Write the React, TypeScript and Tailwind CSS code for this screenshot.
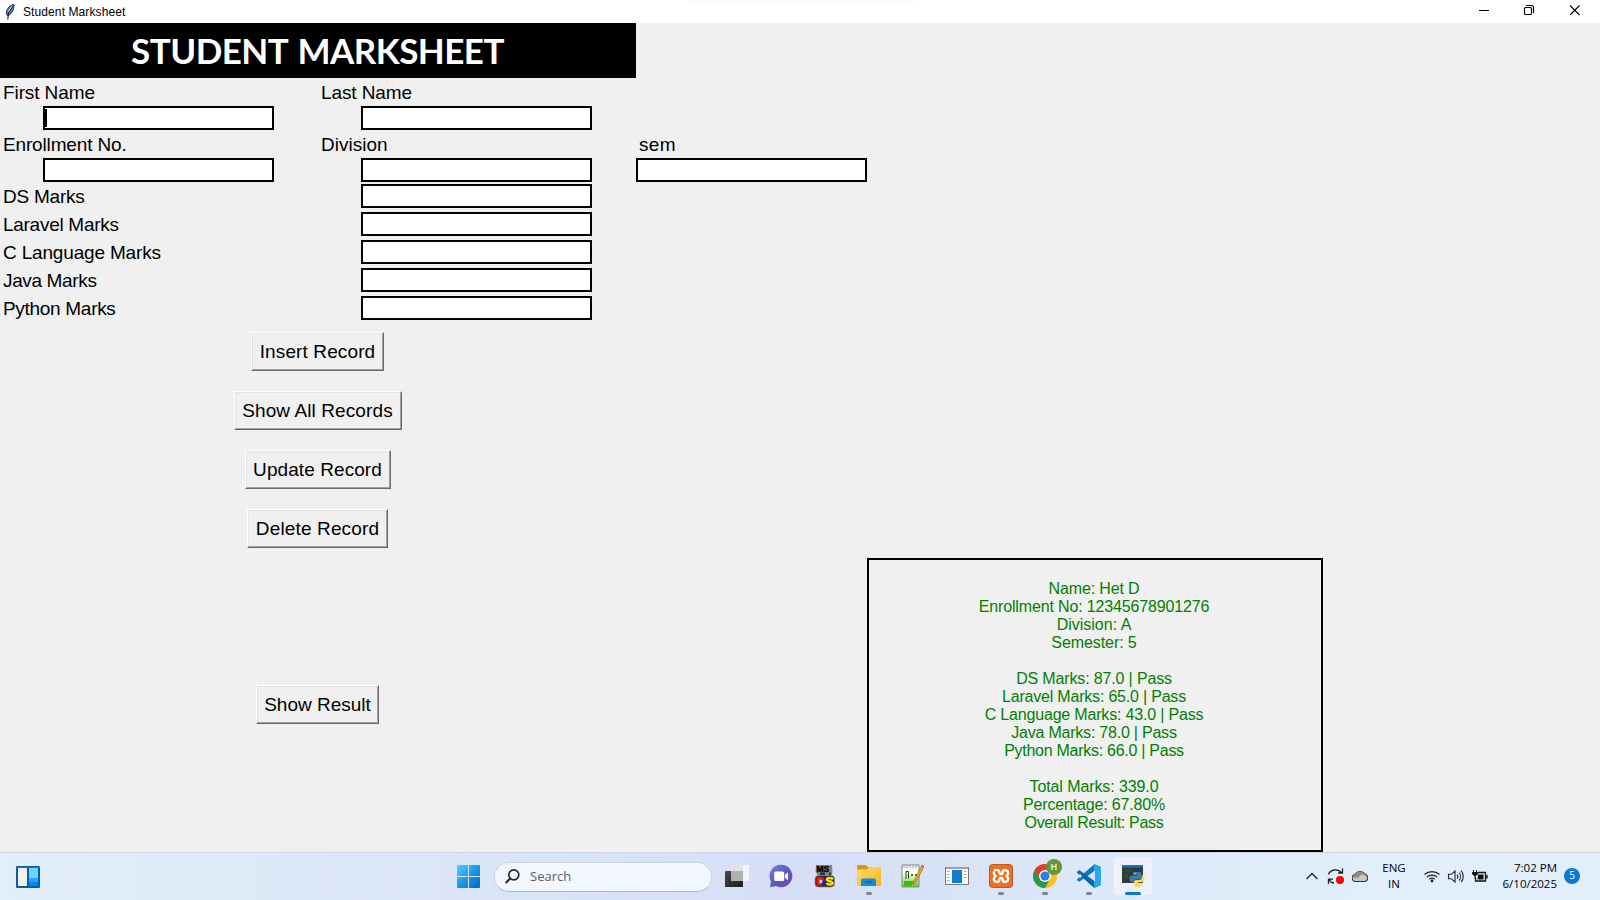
import type { ReactNode } from "react";

const ARIAL = "font-['Liberation_Sans',Arial,sans-serif]";
const SEGOE = "font-['Open_Sans','Noto_Sans',sans-serif]";

function Label({ text, spacing = "" }: { text: string; spacing?: string }) {
  return <label className={`block h-7 pt-px pl-[3px] text-[19px] leading-7 whitespace-nowrap ${spacing}`}>{text}</label>;
}

function Entry({ focused = false, className = "" }: { focused?: boolean; className?: string }) {
  return (
    <div className={`flex h-6 w-[231px] items-center border-2 border-black bg-white ${className}`}>
      {focused && <span className="h-[18px] w-0.5 bg-black" />}
    </div>
  );
}

function TkButton({ text, width, spacing }: { text: string; width: string; spacing: string }) {
  return (
    <button
      className={`${width} h-[39px] border border-t-white border-l-white border-r-[#696969] border-b-[#696969]`}
    >
      <span className={`flex h-full items-center justify-center border border-t-[#e3e3e3] border-l-[#e3e3e3] border-r-[#a0a0a0] border-b-[#a0a0a0] pt-0.5 text-[19px] whitespace-nowrap ${spacing}`}>
        {text}
      </span>
    </button>
  );
}

const markRows = [
  { text: "DS Marks", spacing: "tracking-[-0.22px]" },
  { text: "Laravel Marks", spacing: "tracking-[-0.28px]" },
  { text: "C Language Marks", spacing: "tracking-[-0.17px]" },
  { text: "Java Marks", spacing: "tracking-[-0.36px]" },
  { text: "Python Marks", spacing: "tracking-[-0.3px]" },
];

const resultLines = [
  { text: "Name: Het D", spacing: "tracking-[-0.15px]" },
  { text: "Enrollment No: 12345678901276", spacing: "tracking-[-0.15px]" },
  { text: "Division: A", spacing: "" },
  { text: "Semester: 5", spacing: "tracking-[-0.08px]" },
  { text: "", spacing: "" },
  { text: "DS Marks: 87.0 | Pass", spacing: "tracking-[-0.15px]" },
  { text: "Laravel Marks: 65.0 | Pass", spacing: "tracking-[-0.2px]" },
  { text: "C Language Marks: 43.0 | Pass", spacing: "tracking-[-0.18px]" },
  { text: "Java Marks: 78.0 | Pass", spacing: "tracking-[-0.22px]" },
  { text: "Python Marks: 66.0 | Pass", spacing: "tracking-[-0.27px]" },
  { text: "", spacing: "" },
  { text: "Total Marks: 339.0", spacing: "tracking-[-0.1px]" },
  { text: "Percentage: 67.80%", spacing: "tracking-[-0.17px]" },
  { text: "Overall Result: Pass", spacing: "tracking-[-0.3px]" },
];

function TitleBar() {
  return (
    <header className="flex h-[23px] shrink-0 items-center bg-white">
      <svg className="ml-[5px] h-4 w-[10px]" viewBox="0 0 10 16">
        <path d="M9 .5C5 1 2 4 1.3 9l1.2 3 2-1.2C7 9 9.300 5 9 .5Z" fill="#5483b8" stroke="#17212c" strokeWidth=".9" />
        <path d="M8 2 3.500 9 2.800 15.500" fill="none" stroke="#101820" strokeWidth="1" />
        <path d="M7 2 3 8" stroke="#b7d4f2" strokeWidth="1" />
      </svg>
      <span className="ml-2 pt-px text-[12px] leading-[22px] tracking-[0.1px]">Student Marksheet</span>
      <span className="ml-[563px] h-[3px] w-[228px] self-start bg-linear-to-b from-[#f9f9f9] to-white" />
      <span className="ml-auto flex">
        <svg className="h-[23px] w-[45px]" viewBox="0 0 45 23"><path d="M17 10.500h10" stroke="#000" /></svg>
        <svg className="h-[23px] w-[45px]" viewBox="0 0 45 23" fill="none" stroke="#000">
          <rect x="17.500" y="7.500" width="7" height="7" rx="1" strokeWidth="1.150" />
          <path d="M19 5.500h5.500a2 2 0 0 1 2 2V13" strokeWidth="1.150" />
        </svg>
        <svg className="mr-[3px] h-[23px] w-[45px]" viewBox="0 0 45 23"><path d="m18 5.500 9.500 9.500M27.500 5.500 18 15" stroke="#000" strokeWidth="1.100" /></svg>
      </span>
    </header>
  );
}

function WidgetsIcon() {
  return (
    <svg className="h-[22px] w-6" viewBox="0 0 24 22">
      <rect width="24" height="22" rx="1" fill="#0b5cad" />
      <path d="M0 1h24v1H0z" fill="#0a7ad1" />
      <rect x="2" y="2" width="9" height="18" rx=".8" fill="#f3f3f3" />
      <path d="M13 2h9v10h-9z" fill="#66d5ff" />
      <path d="M13 12h9v4h-9z" fill="#22a7ff" />
      <path d="M13 16h9v4h-9z" fill="#0884f0" />
    </svg>
  );
}

function WindowsIcon() {
  return (
    <svg className="size-[23px]" viewBox="0 0 23 23">
      <defs>
        <linearGradient id="win" x1="0" y1="0" x2="1" y2="1">
          <stop offset="0" stopColor="#4fd0ff" /><stop offset=".5" stopColor="#1b98e3" /><stop offset="1" stopColor="#0067c7" />
        </linearGradient>
      </defs>
      <path fill="url(#win)" d="M1 0h10v11H0V1a1 1 0 0 1 1-1Zm11 0h10a1 1 0 0 1 1 1v10H12ZM0 12h11v11H1a1 1 0 0 1-1-1Zm12 0h11v10a1 1 0 0 1-1 1H12Z" />
    </svg>
  );
}

const TaskView = (
  <svg className="size-6" viewBox="0 0 24 24">
    <defs><linearGradient id="tv" x2="1" y2="1"><stop stopColor="#4a4a4a" /><stop offset="1" stopColor="#1c1c1c" /></linearGradient></defs>
    <rect y="7" width="18" height="16" rx=".6" fill="url(#tv)" />
    <path d="M6 1h18v16H6z" fill="#f4f4f6" />
    <path d="M6 7h12v10H6z" fill="#b1b1b1" />
    <path d="M6 1h12v6H6z" fill="#e2e2e6" />
  </svg>
);

const Chat = (
  <svg className="size-6" viewBox="0 0 24 24">
    <defs><linearGradient id="chat" x1="0" y1="0" x2="1" y2="1"><stop stopColor="#7983df" /><stop offset=".5" stopColor="#5c59c1" /><stop offset="1" stopColor="#7047b8" /></linearGradient></defs>
    <path d="M12 .7a11.300 11.300 0 1 1-5 21.400L1 23.300l1-5.700A11.300 11.300 0 0 1 12 .7Z" fill="url(#chat)" />
    <rect x="5.200" y="7.500" width="10" height="9.500" rx="1.500" fill="#fff" />
    <path d="m16 10.800 3-2.500v8l-3-2.500z" fill="#fff" />
  </svg>
);

const MsDos = (
  <svg className="size-6" viewBox="0 0 24 24">
    <path d="M3 1h16l.5 7-1 3h-14L2.500 8z" fill="#858585" />
    <text x="3.500" y="8" fontSize="8.500" fontWeight="700" fill="#080808" stroke="#080808" strokeWidth=".6" fontFamily="Liberation Sans, sans-serif">MS</text>
    <path d="M7 8.500h5v3H7z" fill="#333" />
    <path d="M17 8.500v4" stroke="#333" strokeWidth="2" />
    <rect x="2" y="11.500" width="19.500" height="11.500" rx="3.500" fill="#242424" stroke="#8a8a8a" strokeWidth=".8" />
    <path d="M3.500 13H8c3 0 4 1.500 4 4s-1 4.500-4 4.500H3.500z" fill="#f41212" />
    <path d="M6.500 15.500v4c2.500 0 3-.7 3-2s-.5-2-3-2Z" fill="#d6d6d6" />
    <path d="M13 12.500h3l-5 9H9.500l-1-2z" fill="#1522ce" />
    <path d="M20 15.500c-1-2-6-2-6 0s5.500 1.500 5.500 3.500-5 2-6 0" fill="none" stroke="#f5dd0b" strokeWidth="2.600" />
  </svg>
);

const Folder = (
  <svg className="size-6" viewBox="0 0 24 24">
    <defs><linearGradient id="fold" x2="1" y2="1"><stop stopColor="#ffdc6c" /><stop offset="1" stopColor="#f8b320" /></linearGradient></defs>
    <path d="M1 1h7.500L11 3h12v6H0V2a1 1 0 0 1 1-1Z" fill="#d79a0e" />
    <path d="M0 5.500h9.500L12 3h11a1 1 0 0 1 1 1v17a1 1 0 0 1-1 1H1a1 1 0 0 1-1-1Z" fill="url(#fold)" />
    <path d="M4 22v-5.500a2 2 0 0 1 2-2h11a2 2 0 0 1 2 2V22Z" fill="#138bd9" />
    <path d="M8 18h7" stroke="#075ea5" strokeWidth="1.400" />
  </svg>
);

const NotepadPlus = (
  <svg className="size-6" viewBox="0 0 24 24">
    <defs><linearGradient id="npp" x2="0" y2="1"><stop stopColor="#fff" /><stop offset=".4" stopColor="#f4fbe8" /><stop offset="1" stopColor="#5fcf2c" /></linearGradient></defs>
    <path d="M1 1h17v22H1z" fill="url(#npp)" stroke="#858585" />
    <path d="M2 2h15v3H2z" fill="#eef0f4" />
    <path d="M3 1v3m3-3v3m3-3v3m3-3v3m3-3v3" stroke="#9d9d9d" strokeWidth=".8" />
    <path d="M5 7.500V15m0-7.500h2.500v7M10 11h2m2 0h2m-5-1v2m4-2v2" stroke="#2b3425" fill="none" />
    <path d="M3 17h10l-3 5H3z" fill="#31bf10" />
    <path d="m20.500 2 2 1.500L14.500 19l-2.500 2 .5-3Z" fill="#eda02c" stroke="#9b652b" strokeWidth=".6" />
    <path d="m20 1.500 1-1 2.300 1.800-1 1.500Z" fill="#d45b4b" />
  </svg>
);

const WindowApp = (
  <svg className="size-6" viewBox="0 0 24 24">
    <path d="M.5 3.500h23v17H.5z" fill="#fafafa" stroke="#777" />
    <path d="M1 3h22v2H1z" fill="#a1a1a1" />
    <path d="M7 6h10v13H7z" fill="#147bd4" />
    <path d="M2 7.500h3m-3 3h3m-3 3h3m-3 3h3M19 7.500h3m-3 3h3m-3 3h3" stroke="#a5a5a5" strokeDasharray="2 .7" />
  </svg>
);

const Xampp = (
  <svg className="size-6" viewBox="0 0 24 24">
    <rect x=".5" y=".5" width="23" height="23" rx="3" fill="#ed7122" stroke="#b85b22" />
    <path
      d="M5 6.200h3.500c1.300 0 1.800.6 1.800 1.800 0 1.500.6 2.200 1.700 2.200s1.700-.7 1.700-2.200c0-1.200.5-1.800 1.800-1.800 2.500 0 3.700 1.200 3.700 2.900 0 1.500-.8 2.400-2 2.900 1.200.5 2 1.400 2 2.900 0 1.700-1.200 2.900-3.700 2.900-1.300 0-1.800-.6-1.800-1.800 0-1.500-.6-2.200-1.700-2.200s-1.700.7-1.700 2.200c0 1.200-.5 1.800-1.800 1.800-2.500 0-3.700-1.200-3.700-2.900 0-1.500.8-2.400 2-2.900-1.200-.5-2-1.400-2-2.900V7.500"
      fill="none" stroke="#fff" strokeWidth="2.300" strokeLinejoin="round"
    />
  </svg>
);

const Chrome = (
  <span className="relative block size-6">
    <svg className="size-6" viewBox="0 0 24 24">
      <circle cx="12" cy="12" r="12" fill="#fbc116" />
      <path d="M12 12 1.600 6A12 12 0 0 0 12 24l5.200-9z" fill="#299b48" />
      <path d="M1.600 6A12 12 0 0 1 22.400 6H12l-5.200 9z" fill="#e33b2e" />
      <circle cx="12" cy="12" r="6" fill="#fff" />
      <circle cx="12" cy="12" r="4.600" fill="#3279e9" />
    </svg>
    <span className="absolute -top-[5px] left-[13px] flex size-4 items-center justify-center rounded-full bg-[#629839] text-[9px] font-semibold text-white">H</span>
  </span>
);

const Code = (
  <svg className="size-6" viewBox="0 0 24 24">
    <path d="M17.500.2 24 3v18l-6.500 2.800L7 14.200l-4.600 3.500L.2 16.500v-1.600L16.500 1z" fill="#087bbb" />
    <path d="M2.400 6.200.2 7.500V9l16.500 14.500.8.3L18 17z" fill="#0b66a9" />
    <path d="M17.500.2 24 3v18l-6.500 2.800-.5-1V1z" fill="#29a7e6" />
    <path d="M18 6.500V17.500L10.500 12z" fill="#d6e2f7" />
    <path d="M2.500 9.500 5.200 12l-2.700 2.500z" fill="#d6e0f8" />
  </svg>
);

const Python = (
  <svg className="size-6" viewBox="0 0 24 24">
    <path d="M1 1h21v18H1z" fill="#303a3b" />
    <path d="M1 1h21v2.500H1z" fill="#1873b6" />
    <path d="M3 7h7m-7 3h4m-4 3h6" stroke="#315d3c" strokeWidth="1.200" />
    <path d="M13 8h5c2 0 2.500 1 2.500 3v2c0 2-1 2.500-3 2.500h-3c-2 0-2 1-2 2.500H11c-2 0-2.500-1.500-2.500-3s1-3.500 3-3.500h5v-.8H12V9.500C12 8.500 12.300 8 13 8Z" fill="#397cb0" />
    <path d="M21.500 11.500c1.500 0 2 1.500 2 3.300S23 18 21 18h-4v.7h4v2c0 1.800-1.800 2.300-4 2.300s-4.200-.8-4.200-2.500v-2.300c0-1.500 1-2.200 2.500-2.200h3c1.800 0 2.500-1 2.500-2.500v-2Z" fill="#fbd85a" />
    <circle cx="14" cy="9.600" r=".7" fill="#fff" />
    <circle cx="19" cy="21" r=".7" fill="#fff" />
  </svg>
);

const apps: { name: string; icon: ReactNode; state?: "open" | "active" }[] = [
  { name: "taskview", icon: TaskView },
  { name: "chat", icon: Chat },
  { name: "msdos", icon: MsDos },
  { name: "folder", icon: Folder, state: "open" },
  { name: "notepad", icon: NotepadPlus },
  { name: "window", icon: WindowApp },
  { name: "xampp", icon: Xampp, state: "open" },
  { name: "chrome", icon: Chrome, state: "open" },
  { name: "code", icon: Code, state: "open" },
  { name: "python", icon: Python, state: "active" },
];

function Tray() {
  return (
    <div className="flex h-full items-center pr-5 pb-0.5 text-black">
      <svg className="h-6 w-3" viewBox="0 0 12 24" fill="none" stroke="#222" strokeWidth="1.300"><path d="m.5 15 5.500-5.500 5.500 5.500" /></svg>
      <svg className="ml-[9px] h-6 w-[18px]" viewBox="0 0 18 24" fill="none" stroke="#222" strokeWidth="1.300">
        <path d="M1.500 10.500C3 6 10 3.500 15 9M15.500 4.500V9H11M7 19c-2 0-4-1.500-5-4M1.500 20v-4.800H6" />
        <circle cx="13" cy="16" r="4" fill="#fb0303" stroke="none" />
      </svg>
      <svg className="ml-[7px] h-6 w-4" viewBox="0 0 16 24">
        <path d="M4 17.500a3.500 3.500 0 0 1-.5-7 5 5 0 0 1 9-.3 3.700 3.700 0 0 1 .3 7.300Z" fill="#c7c7c7" stroke="#333" strokeWidth="1.100" />
        <path d="M3.700 10.500a4.700 4.700 0 0 1 8.600-.3C8 9.500 8 14 4 14c-4 0-3-3-.3-3.500Z" fill="#8e8e8e" />
      </svg>
      <div className="ml-3 w-7 text-center text-[11.500px] leading-4"><div>ENG</div><div>IN</div></div>
      <svg className="ml-[15px] h-6 w-[18px]" viewBox="0 0 18 24" fill="none" stroke="#222" strokeWidth="1.200">
        <path d="M1.500 10.500a11 11 0 0 1 15 0M4 13a7.500 7.500 0 0 1 10 0M6.300 15.300a4 4 0 0 1 5.400 0" />
        <circle cx="9" cy="17" r="1.400" fill="#222" stroke="none" />
      </svg>
      <svg className="ml-1.5 h-6 w-[18px]" viewBox="0 0 18 24" fill="none" stroke="#222" strokeWidth="1.100">
        <path d="M1.500 10.300h2.800L8 7v11l-3.700-3.300H1.500ZM10 10.500a3 3 0 0 1 0 4M12 8.500a6 6 0 0 1 0 8M14 6.700a8.500 8.500 0 0 1 0 11.500" />
      </svg>
      <svg className="ml-1.5 h-6 w-[18px]" viewBox="0 0 18 24" fill="none" stroke="#111">
        <path d="M7 8.500h7.500v8.500h-10V13M16 11v3.500" strokeWidth="1.300" />
        <path d="M7 10.500h5.500v5H6.500z" fill="#111" stroke="none" />
        <path d="M2.500 6v3m3-3v3" />
        <path d="M1.500 8.500h5v1.500L5 11.500H3L1.500 10zM4 11.500v3" fill="#111" />
      </svg>
      <div className="ml-3 flex w-[56px] flex-col items-end text-[11.500px] leading-4 whitespace-nowrap">
        <div>7:02 PM</div>
        <div>6/10/2025</div>
      </div>
      <span className="ml-[7px] flex size-4 items-center justify-center rounded-full bg-[#0879d5] text-[10px] text-white">5</span>
    </div>
  );
}

function Taskbar() {
  return (
    <footer className={`flex h-12 shrink-0 items-center border-t border-[#cbd9e8] bg-linear-to-r from-[#e2eef9] from-0% via-[#d6dff6] via-50% to-[#e2effa] to-85% ${SEGOE}`}>
      <div className="ml-4 w-[441px]"><WidgetsIcon /></div>
      <WindowsIcon />
      <div className="ml-3.5 flex h-[30px] w-[218px] items-center rounded-full border border-[#cbd3e6] border-b-[#acb6cb] bg-[#f2f6fe]">
        <svg className="ml-2.5 size-[15px]" viewBox="0 0 15 15" fill="none" stroke="#222" strokeWidth="1.600">
          <circle cx="8.800" cy="5.900" r="5" /><path d="M5.200 9.500.7 14" strokeWidth="2" />
        </svg>
        <span className="ml-2.5 text-[13px] text-[#5d5f63]">Search</span>
      </div>
      <div className="ml-[3px] flex h-full">
        {apps.map((app) => (
          <div key={app.name} className="flex w-11 justify-center pt-1">
            <div className={`flex h-[38px] w-[38px] flex-col items-center rounded pt-[7px] ${app.state === "active" ? "bg-[#edf1fb]" : ""}`}>
              {app.icon}
              {app.state === "open" && <span className="mt-1 h-[3px] w-1.5 rounded-full bg-[#7d8390]" />}
              {app.state === "active" && <span className="mt-1 h-[3px] w-4 rounded-full bg-[#0b78d0]" />}
            </div>
          </div>
        ))}
      </div>
      <div className="ml-auto h-full"><Tray /></div>
    </footer>
  );
}

export default function App() {
  return (
    <div className={`flex h-[900px] w-[1600px] flex-col overflow-hidden bg-[#f0f0f0] text-black ${ARIAL}`}>
      <TitleBar />
      <main className="flex flex-1 flex-col items-start">
        <h1 className="flex h-[55px] w-[636px] items-center justify-center bg-black pr-px font-['Lato',sans-serif] text-[35px] leading-none font-bold tracking-[-0.55px] [word-spacing:2.500px] whitespace-nowrap text-white">
          STUDENT MARKSHEET
        </h1>
        <div className="grid grid-cols-[318px_318px_231px]">
          <Label text="First Name" spacing="tracking-[-0.1px]" />
          <Label text="Last Name" spacing="tracking-[-0.1px]" />
          <span />
          <Entry focused className="ml-[43px]" />
          <Entry className="ml-[43px]" />
          <span />
          <Label text="Enrollment No." spacing="tracking-[-0.15px]" />
          <Label text="Division" />
          <Label text="sem" spacing="tracking-[0.3px]" />
          <Entry className="ml-[43px]" />
          <Entry className="ml-[43px]" />
          <Entry />
        </div>
        {markRows.map((row) => (
          <div key={row.text} className="grid h-7 grid-cols-[318px_318px] items-center">
            <Label text={row.text} spacing={row.spacing} />
            <Entry className="ml-[43px]" />
          </div>
        ))}
        <div className="flex w-[635px] flex-col items-center gap-5 py-2.5">
          <TkButton text="Insert Record" width="w-[133px]" spacing="tracking-[0.12px]" />
          <TkButton text="Show All Records" width="w-[168px]" spacing="tracking-[0.1px]" />
          <TkButton text="Update Record" width="w-[146px]" spacing="tracking-[0.08px]" />
          <TkButton text="Delete Record" width="w-[141px]" spacing="tracking-[0.14px]" />
        </div>
        <div className="flex items-center">
          <div className="flex w-[635px] justify-center pb-px">
            <TkButton text="Show Result" width="w-[123px]" spacing="" />
          </div>
          <section className="ml-[232px] flex h-[294px] w-[456px] flex-col justify-center border-2 border-black pt-0.5 pr-0.5 text-center text-base text-[#008000]">
            {resultLines.map((line, i) => (
              <p key={i} className={`h-[18px] leading-[18px] ${line.spacing}`}>{line.text}</p>
            ))}
          </section>
        </div>
      </main>
      <Taskbar />
    </div>
  );
}
